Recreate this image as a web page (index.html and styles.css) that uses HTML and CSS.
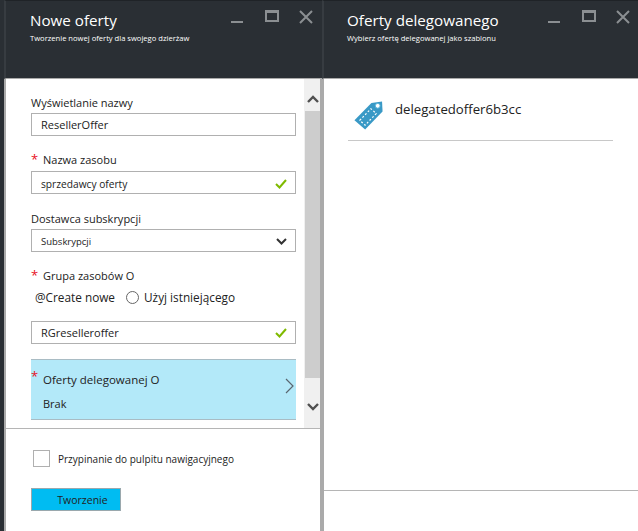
FILE: index.html
```html
<!DOCTYPE html>
<html lang="pl">
<head>
  <meta charset="UTF-8">
  <title>Nowe oferty</title>
  <link rel="stylesheet" href="styles.css">
</head>
<body>
  <div class="portal">
    <div class="edge"></div>

    <section class="blade blade-new">
      <header class="blade-head">
        <div class="head-text">
          <h1 class="head-title">Nowe oferty</h1>
          <p class="head-sub">Tworzenie nowej oferty dla swojego dzierżaw</p>
        </div>
        <div class="head-controls">
          <span class="ctl-min"></span>
          <span class="ctl-max"></span>
          <svg class="ctl-close" width="14" height="14" viewBox="0 0 14 14"><path d="M1 1l12 12M13 1L1 13" stroke="#8b8f92" stroke-width="2" fill="none"/></svg>
        </div>
      </header>

      <div class="blade-body">
        <div class="form-scroll">
          <form class="form">
            <label class="label label-first">Wyświetlanie nazwy</label>
            <div class="field">ResellerOffer</div>

            <label class="label label-req"><span class="star">*</span>Nazwa zasobu</label>
            <div class="field field-small">sprzedawcy oferty
              <svg class="check" width="12" height="10" viewBox="0 0 12 10"><path d="M1 5l3.5 3.5L11 1" stroke="#7fba00" stroke-width="2" fill="none"/></svg>
            </div>

            <label class="label label-sub">Dostawca subskrypcji</label>
            <div class="field field-tiny">Subskrypcji
              <svg class="caret" width="11" height="7" viewBox="0 0 11 7"><path d="M1 1l4.500 4.500L10 1" stroke="#333" stroke-width="2" fill="none"/></svg>
            </div>

            <label class="label label-req"><span class="star">*</span>Grupa zasobów O</label>
            <div class="radios">
              <span>@Create nowe</span>
              <span class="radio"></span>
              <span>Użyj istniejącego</span>
            </div>
            <div class="field field-last">RGreselleroffer
              <svg class="check" width="12" height="10" viewBox="0 0 12 10"><path d="M1 5l3.5 3.5L11 1" stroke="#7fba00" stroke-width="2" fill="none"/></svg>
            </div>

            <div class="picker">
              <span class="star star-picker">*</span>
              <div class="picker-name">Oferty delegowanej O</div>
              <div class="picker-value">Brak</div>
              <svg class="picker-arrow" width="9" height="16" viewBox="0 0 9 16"><path d="M1 1l7 7-7 7" stroke="#5a6670" stroke-width="1.200" fill="none"/></svg>
            </div>
          </form>

          <div class="scrollbar">
            <div class="scroll-btn">
              <svg width="12" height="8" viewBox="0 0 12 8"><path d="M1 7l5-5 5 5" stroke="#505050" stroke-width="2.400" fill="none"/></svg>
            </div>
            <div class="scroll-thumb"></div>
            <div class="scroll-btn scroll-btn-down">
              <svg width="12" height="8" viewBox="0 0 12 8"><path d="M1 1l5 5 5-5" stroke="#505050" stroke-width="2.400" fill="none"/></svg>
            </div>
          </div>
        </div>

        <footer class="blade-foot">
          <div class="pin">
            <span class="checkbox"></span>
            <span class="pin-text">Przypinanie do pulpitu nawigacyjnego</span>
          </div>
          <button class="create" type="button">Tworzenie</button>
        </footer>
      </div>
    </section>

    <section class="blade blade-offers">
      <header class="blade-head">
        <div class="head-text">
          <h1 class="head-title">Oferty delegowanego</h1>
          <p class="head-sub">Wybierz ofertę delegowanej jako szablonu</p>
        </div>
        <div class="head-controls">
          <span class="ctl-min"></span>
          <span class="ctl-max"></span>
          <svg class="ctl-close" width="14" height="14" viewBox="0 0 14 14"><path d="M1 1l12 12M13 1L1 13" stroke="#8b8f92" stroke-width="2" fill="none"/></svg>
        </div>
      </header>

      <div class="blade-body">
        <div class="offers-list">
          <div class="offer">
            <svg class="offer-icon" width="31" height="32" viewBox="0 0 32 32">
              <path d="M1.500 21.500L19 3.500L30 2L30.500 12.500L12.500 31Z" fill="#3999c6"/>
              <path d="M7 21.500L18.500 9.500L24 14.500L12.500 26.500Z" fill="none" stroke="#fff" stroke-width="1.200" stroke-dasharray="2 2"/>
              <circle cx="25.500" cy="6.500" r="2.500" fill="#fff" stroke="#59b4d9"/>
            </svg>
            <span class="offer-name">delegatedoffer6b3cc</span>
          </div>
        </div>
        <div class="offers-foot"></div>
      </div>
    </section>
  </div>
</body>
</html>
```

FILE: styles.css
```css
* {
  box-sizing: border-box;
}

html, body {
  margin: 0;
  padding: 0;
  background: #fff;
}

.portal {
  display: flex;
  width: 638px;
  height: 531px;
  overflow: hidden;
  font-family: "Open Sans", "Liberation Sans", sans-serif;
  color: #222;
}

.edge {
  width: 4px;
  background: #2a2f34;
}

.blade {
  display: flex;
  flex-direction: column;
}

.blade-new {
  width: 318px;
}

.blade-offers {
  flex: 1;
}

.blade-head {
  display: flex;
  justify-content: space-between;
  height: 79px;
  background: #2a2f34;
  border-top: 1px solid #1f2327;
  border-left: 2px solid #373c41;
  border-bottom: 1px solid #aaa;
  color: #fff;
}

.head-text {
  padding: 9px 0 0 24px;
}

.blade-offers .head-text {
  padding-left: 23px;
}

.head-title {
  margin: 0;
  font-size: 15.200px;
  font-weight: 400;
  line-height: 20px;
}

.head-sub {
  margin: 3px 0 0;
  font-size: 7.600px;
  line-height: 11px;
}

.head-controls {
  display: flex;
  align-items: flex-start;
  padding: 9px 9px 0 0;
}

.blade-offers .head-controls {
  padding-right: 8px;
}

.ctl-min {
  width: 12px;
  height: 2px;
  margin-top: 11px;
  background: #8b8f92;
}

.ctl-max {
  width: 14px;
  height: 12px;
  margin: 0 20px 0 22px;
  border: 2px solid #8b8f92;
  border-top-width: 3px;
}

.blade-body {
  flex: 1;
  display: flex;
  flex-direction: column;
  border-left: 2px solid #aaa;
}

.blade-new .blade-body {
  border-right: 2px solid #aaa;
}

.form-scroll {
  display: flex;
  height: 350px;
  border-bottom: 1px solid #b5b5b5;
}

.form {
  flex: 1;
  padding: 16px 8px 0 25px;
}

.label {
  display: block;
  font-size: 11px;
  line-height: 16px;
}

.label-req {
  margin-top: 16px;
}

.label-sub {
  margin-top: 17px;
}

.star {
  display: inline-block;
  width: 12px;
  color: #e81123;
  font-size: 13px;
  line-height: 14px;
}

.field {
  display: flex;
  align-items: center;
  justify-content: space-between;
  height: 23px;
  margin-top: 2px;
  padding: 0 8px 0 9px;
  border: 1px solid #b0b0b0;
  font-size: 11px;
}

.field-small {
  margin-top: 3px;
  padding-top: 3px;
  font-size: 10.200px;
}

.field-tiny {
  padding-top: 2px;
  font-size: 9.500px;
}

.field-last {
  margin-top: 16px;
}

.radios {
  display: flex;
  align-items: center;
  gap: 5px;
  height: 16px;
  margin: 5px 0 0 4px;
  font-size: 11.800px;
}

.radio {
  width: 13px;
  height: 13px;
  margin-left: 6px;
  border: 1px solid #666;
  border-radius: 50%;
}

.picker {
  position: relative;
  height: 61px;
  margin-top: 15px;
  padding: 12px 0 0 12px;
  background: #b3e9f9;
  border-top: 1px solid #a9bcc4;
  border-bottom: 1px solid #a9bcc4;
  font-size: 11px;
}

.star-picker {
  position: absolute;
  left: 0;
  top: 9px;
}

.picker-name {
  font-size: 11.500px;
  line-height: 16px;
}

.picker-value {
  margin-top: 8px;
  line-height: 16px;
}

.picker-arrow {
  position: absolute;
  right: 2px;
  top: 18px;
}

.check, .caret {
  flex-shrink: 0;
}

.scrollbar {
  display: flex;
  flex-direction: column;
  width: 16px;
  padding-left: 1px;
  background: #f0f0f0;
}

.scroll-btn {
  display: flex;
  align-items: center;
  justify-content: center;
  height: 32px;
  padding-top: 7px;
}

.scroll-btn-down {
  height: 50px;
  padding-top: 8px;
}

.scroll-thumb {
  flex: 1;
  background: #cdcdcd;
}

.blade-foot {
  flex: 1;
  padding: 21px 0 0 25px;
}

.pin {
  display: flex;
  align-items: center;
  gap: 8px;
  margin-left: 2px;
}

.checkbox {
  width: 17px;
  height: 17px;
  border: 1px solid #b0b0b0;
}

.pin-text {
  font-size: 10px;
}

.create {
  display: block;
  width: 90px;
  height: 23px;
  margin-top: 21px;
  padding: 0 0 0 13px;
  background: #00bcf2;
  border: 1px solid #9aa8ad;
  border-radius: 0;
  font-family: inherit;
  font-size: 10.500px;
  color: #222;
}

.offers-list {
  height: 412px;
  padding: 20px 25px 0 24px;
  border-bottom: 1px solid #b5b5b5;
}

.offer {
  display: flex;
  align-items: flex-start;
  gap: 11px;
  height: 42px;
  padding-left: 5px;
  border-bottom: 1px solid #c8c8c8;
}

.offer-name {
  margin-top: 1px;
  font-size: 13.200px;
  line-height: 18px;
}
```
